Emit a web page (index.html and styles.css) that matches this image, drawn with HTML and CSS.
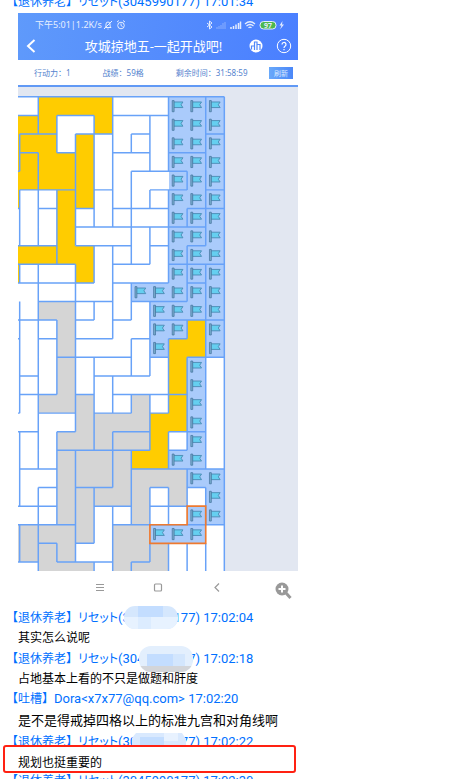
FILE: index.html
```html
<!DOCTYPE html>
<html lang="zh-CN">
<head>
<meta charset="utf-8">
<title>聊天记录</title>
<link rel="stylesheet" href="styles.css">
</head>
<body>
<main class="chat">
  <div class="sender sender-first"><span class="tag">【退休养老】</span><span class="kana">リセット</span>(3045990177) 17:01:34</div>

  <section class="phone">
    <header class="top">
      <div class="status">
        <span>下午5:01|1.2K/s</span>
        <svg class="status-left" viewBox="0 0 24 10" fill="none" stroke="currentColor">
          <path d="M2 7.500h6c-1-1-1-2-1-3.500a2 2 0 0 0-4 0c0 1.500 0 2.500-1 3.500M4.500 9h1M1 9l8-8"/>
          <circle cx="18" cy="5.500" r="3.300"/><path d="M18 3.500v2l1.500 1M14 2l2-1.500M22 2l-2-1.500"/>
        </svg>
        <svg class="status-right" viewBox="0 0 80 10" fill="none" stroke="currentColor">
          <path d="M2 3l5 4-2.500 2V1L7 3 2 7"/>
          <path d="M12 9V7M14 9V6M16 9V5M18 9V3M20 9V2" opacity=".4"/>
          <path d="M26 9V7M28.500 9V6M31 9V4.500M33.500 9V3M35.500 9V1.500" stroke-width="1.500"/>
          <path d="M40 4q5-4.500 10 0M41.500 6q3.500-3 7 0M43.500 7.800q1.500-1.300 3 0" stroke-width="1.300"/>
          <rect x="55" y="1.500" width="16" height="7.500" rx="3.500" fill="#4cc22f"/>
          <path d="M77.500 1l-3 4.500h2L75 9.500l4-5h-2z" fill="currentColor" stroke="none"/>
          <text x="63" y="7.500" text-anchor="middle" class="battery">97</text>
        </svg>
      </div>
      <div class="titlebar">
        <button class="icon" aria-label="返回"><svg viewBox="0 0 16 16" fill="none" stroke="currentColor" stroke-width="2"><path d="M11.500 2L5 8l6.500 6"/></svg></button>
        <h1>攻城掠地五-一起开战吧!</h1>
        <button class="icon" aria-label="排行"><svg viewBox="0 0 16 16"><circle cx="8" cy="8" r="6.500" fill="#fff"/><path d="M3.500 11.500V8H6M6.500 12V4H9v8M9.500 6.500H12V12" fill="none" stroke="#4f88fa" stroke-width="1.200"/></svg></button>
        <button class="icon" aria-label="帮助"><svg viewBox="0 0 16 16" fill="none" stroke="currentColor"><circle cx="8" cy="8" r="6.700"/><path d="M6 6.500a2 2 0 1 1 3 1.700q-1 .6-1 1.800M8 11v1.300" stroke-width="1.200"/></svg></button>
      </div>
    </header>
    <div class="stats">
      <span>行动力：1</span>
      <span>战绩：59格</span>
      <span>剩余时间：31:58:59</span>
      <button class="refresh">刷新</button>
    </div>
    <svg class="board" id="board" viewBox="-0.09 -0.53 15.05 26.02" role="img" aria-label="棋盘">
      <defs>
        <g id="flag" transform="scale(.05)">
          <path d="M5.500 5.500H15.500L13.500 8.500 15.500 11.500H5.500z" fill="#65cff0" stroke="#4c8cb5" stroke-width="1"/>
          <path d="M4 4h2v12H4z" fill="#7aaed0" stroke="#43739c" stroke-width=".8"/>
        </g>
      </defs>
    </svg>
    <div class="nav">
      <svg viewBox="0 0 280 34" fill="none" stroke="#999">
        <path d="M78 13.500h8M78 16.500h8M78 19.500h8" />
        <rect x="136.500" y="13" width="7" height="7" rx="1" stroke-width="1.200"/>
        <path d="M201 12.500l-4 4 4 4" stroke-width="1.200"/>
        <circle cx="264" cy="18" r="6.500" fill="#999" stroke="none"/>
        <path d="M268 22l4.500 5" stroke-width="3"/>
        <path d="M264 14.500v7M260.500 18h7" stroke="#fff" stroke-width="2"/>
      </svg>
    </div>
  </section>

  <article>
    <div class="sender"><span class="tag">【退休养老】</span><span class="kana">リセット</span>(3045990177) 17:02:04
      <svg class="mask mask-a" viewBox="0 0 54 24"><clipPath id="ca"><rect width="54" height="23" rx="11"/></clipPath><g clip-path="url(#ca)"><path fill="#d5e7fd" d="M0 0h54v24H0z"/><path fill="#c3ddff" d="M14 0h25v11H14z"/><path fill="#e7f2ff" d="M0 11h54v13H0z"/><path fill="#dcecff" d="M14 11h13v13H14z"/></g></svg>
    </div>
    <p>其实怎么说呢</p>
  </article>
  <article>
    <div class="sender"><span class="tag">【退休养老】</span><span class="kana">リセット</span>(3045990177) 17:02:18
      <svg class="mask mask-b" viewBox="0 0 54 26"><clipPath id="cb"><rect width="54" height="26" rx="12"/></clipPath><g clip-path="url(#cb)"><path fill="#e3effd" d="M0 0h54v26H0z"/><path fill="#c3ddff" d="M8 8h26v12H8z"/><path fill="#d3e6fd" d="M34 8h12v12H34z"/><path fill="#d3d5d9" d="M0 20h54v6H0z"/></g></svg>
    </div>
    <p>占地基本上看的不只是做题和肝度</p>
  </article>
  <article>
    <div class="sender"><span class="tag">【吐槽】</span>Dora&lt;x7x77@qq.com&gt; 17:02:20</div>
    <p class="large">是不是得戒掉四格以上的标准九宫和对角线啊</p>
  </article>
  <article>
    <div class="sender"><span class="tag">【退休养老】</span><span class="kana">リセット</span>(3045990177) 17:02:22
      <svg class="mask mask-c" viewBox="0 0 54 16"><path fill="#d9e9fe" d="M4 0h46l4 6v10H0V5z"/><path fill="#c3ddff" d="M8 4h24v12H8z"/><path fill="#e8f2ff" d="M32 0h14v8H32z"/></svg>
    </div>
    <p class="marked">规划也挺重要的</p>
  </article>
  <div class="sender"><span class="tag">【退休养老】</span><span class="kana">リセット</span>(3045990177) 17:02:30</div>
</main>
<script src="board.js"></script>
</body>
</html>
```
FILE: styles.css
```css
body {
  margin: 0;
  background: #fff;
  color: #000;
  font: 12px/20px "Noto Sans", "Noto Sans CJK SC", sans-serif;
}
.chat { height: 100vh; overflow: hidden; }

.sender {
  position: relative;
  height: 20px;
  padding-left: 6px;
  color: #0070ff;
  font: 13px/20px Roboto, "Noto Sans CJK SC", sans-serif;
  white-space: nowrap;
}
.tag { font-size: 12px; }
.kana {
  font-size: 12px;
  font-family: "Noto Sans CJK JP", sans-serif;
  font-feature-settings: "palt";
}
.sender-first { margin-top: -9px; }
article p { margin: 1px 0 0 18px; line-height: 20px; }
article p.large { font-size: 13px; line-height: 21px; }
article p.marked {
  position: relative;
  box-sizing: border-box;
  max-width: 293px;
  height: 28px;
  margin: -6px 3px -3px;
  padding: 6px 13px 0;
  border: 2px solid #ff2112;
  border-radius: 3px;
  background: #fff;
  line-height: 20px;
}
.mask { position: absolute; width: 54px; }
.mask-a { left: 124px; top: -1px; }
.mask-b { left: 139px; top: -2px; }
.mask-c { left: 132px; top: 2px; }

.phone { max-width: 280px; margin: 2px 0 2px 18px; }
.top {
  padding-top: 5px;
  color: #fff;
  background: linear-gradient(100deg, #5f9afb, #4a7fff);
}
.status {
  display: flex;
  align-items: center;
  height: 13px;
  padding: 0 13px 0 17px;
  font-size: 9px;
  line-height: 13px;
  opacity: .85;
}
.status-left { width: 24px; height: 10px; margin-left: 1px; }
.status-right { width: 80px; height: 10px; margin-left: auto; }
.battery { font: bold 7px "Noto Sans", sans-serif; fill: #fff; stroke: none; }
.titlebar {
  display: flex;
  align-items: center;
  gap: 12px;
  height: 29px;
  padding: 0 6px 0 5px;
}
.titlebar h1 {
  flex: 1;
  margin: 0 0 0 20px;
  font-size: 13px;
  font-weight: 400;
  line-height: 20px;
  text-align: center;
}
.icon {
  width: 16px;
  height: 16px;
  padding: 0;
  border: 0;
  background: none;
  color: inherit;
}
.icon svg { display: block; }
.stats {
  display: flex;
  align-items: center;
  gap: 32px;
  height: 25px;
  padding: 0 5px 0 16px;
  border-bottom: 2px solid #6199f5;
  color: #5483ce;
  font-size: 8px;
  white-space: nowrap;
}
.refresh {
  width: 24px;
  height: 12px;
  margin-left: auto;
  margin-right: 0;
  padding: 0;
  border: 0;
  background: linear-gradient(90deg, #69a9fa, #4b87f8);
  color: #d8e8ff;
  font: 7px/12px "Noto Sans CJK SC", sans-serif;
}
.stats span:last-of-type { margin-right: -32px; }
.board { display: block; width: 100%; background: #e2e7f1; }
.lines { fill: none; stroke: #68a2f8; stroke-width: .08; }
.route { fill: none; stroke: #ee7a30; stroke-width: .09; }
.nav svg { display: block; width: 100%; }
```
FILE: board.js
```js
// Y: yellow land, G: grey land, F: flagged land, first column lies left of x = 0
const rows = [
  "..YYYY...FFF", "YYY..Y...FFF", "YYY.Y....FFF", "YYYYY....FFF", "YYYYY....FFF",
  "Y..YY....FFF", "...Y.....FFF", "...Y.....FFF", "YYYYY....FFF", "Y...Y....FFF",
  ".......FFFFF", "..GG....FFFF", "...G....FFYF", "...G....FYYF", "...G.....YF.",
  "...G.....YF.", "..GGG..G.YF.", "....GGGGYYF.", "...GGGGGY.F.", "...GGGGYYFF.",
  "...GGGGGGGFF", "...GGGGG.G.F", "...GG..G..FF", "GGGGG.GGFFF.", "GGGG..GGG...",
  "..GGG.GGG..."
];
// Borders along each row line: pairs of start and end column
const across = {
  0: [-1, 11], 1: [-1, 1, 2, 4, 5, 8], 2: [0, 2, 3, 5, 6, 7, 10, 11], 3: [0, 1, 2, 3, 5, 7, 8, 10],
  4: [-1, 0, 6, 9], 5: [0, 3, 4, 5, 7, 9, 10, 11], 6: [-1, 0, 1, 2, 3, 4, 5, 8, 9, 11], 7: [3, 10],
  8: [-1, 2, 3, 6, 7, 8, 9, 10], 9: [-1, 3, 5, 7, 8, 11], 10: [-1, 4, 5, 8, 9, 10], 11: [1, 5, 6, 9],
  12: [-1, 2, 3, 4, 5, 6, 7, 11], 13: [-1, 0, 1, 2, 3, 5, 6, 7, 8, 9], 14: [2, 6, 7, 8, 9, 11],
  15: [0, 1, 4, 7], 16: [0, 2, 3, 4, 5, 9], 17: [-1, 0, 1, 3, 4, 6, 7, 8], 18: [-1, 1, 2, 3, 5, 7, 8, 10],
  19: [2, 7, 8, 9], 20: [0, 2, 6, 11], 21: [1, 2, 3, 5, 7, 8, 9, 10], 22: [-1, 2, 4, 6, 7, 9],
  23: [-1, 3, 5, 11], 24: [1, 2, 3, 4], 25: [-1, 1, 2, 5, 6, 7]
};
// Borders along each column line: pairs of start and end row
const down = {
  0: [2, 4, 5, 8, 9, 10, 11, 17, 18, 22, 23, 25],
  1: [0, 2, 3, 8, 9, 20, 21, 26],
  2: [1, 3, 5, 9, 12, 16, 18, 23, 24, 25],
  3: [2, 8, 9, 18, 19, 25],
  4: [1, 7, 8, 10, 11, 12, 14, 19, 21, 24, 25, 26],
  5: [0, 7, 8, 13, 15, 17, 18, 21, 22, 26],
  6: [2, 3, 4, 9, 10, 12, 13, 15, 16, 17, 19, 23, 25, 26],
  7: [1, 4, 5, 6, 7, 9, 11, 15, 16, 19, 21, 23, 24, 25],
  8: [0, 4, 5, 10, 13, 17, 18, 20, 21, 23, 24, 26],
  9: [4, 5, 6, 7, 8, 11, 12, 13, 14, 19, 20, 22, 24, 26],
  10: [0, 8, 9, 20, 21, 23, 24, 26],
  11: [0, 26]
};
const colors = { ".": "#fff", Y: "#ffcc00", G: "#d5d5d5", F: "#aacbfb" };
let out = "";
const fills = {};
let flags = "";
rows.forEach((row, y) => [...row].forEach((kind, i) => {
  fills[kind] = (fills[kind] || "") + `M${i - 1} ${y}h1v1h-1z`;
  if (kind === "F") flags += `<use href="#flag" x="${i - 1}" y="${y}"/>`;
}));
for (const kind in fills) {
  out += `<path shape-rendering="crispEdges" fill="${colors[kind]}" d="${fills[kind]}"/>`;
}
let d = "";
for (const y in across) {
  for (let i = 0; i < across[y].length; i += 2) d += `M${across[y][i]} ${y}H${across[y][i + 1]}`;
}
for (const x in down) {
  for (let i = 0; i < down[x].length; i += 2) d += `M${x} ${down[x][i]}V${down[x][i + 1]}`;
}
out += `<path class="lines" d="${d}"/>${flags}<path class="route" d="M9 22H10V24H7V23H9z"/>`;
document.getElementById("board").insertAdjacentHTML("beforeend", out);
```
